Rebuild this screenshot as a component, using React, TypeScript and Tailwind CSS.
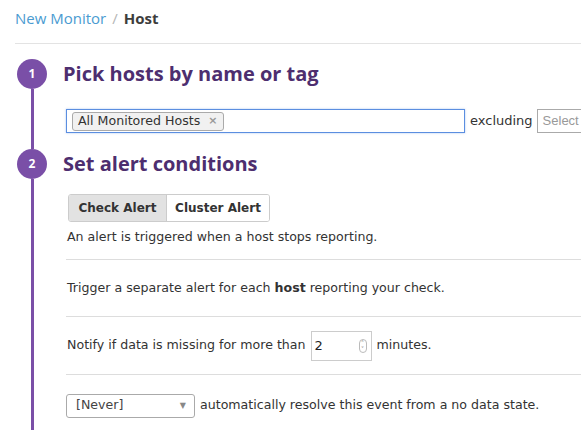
import React from 'react';

const body = "font-['DejaVu_Sans',sans-serif] text-[12.6px] text-[#333]";

const StepRail = ({ n }: { n: number }) => (
  <div className="flex w-[30px] shrink-0 flex-col items-center">
    <div className="flex h-[30px] w-[30px] items-center justify-center rounded-full bg-[#7a4fa7] font-['Open_Sans',sans-serif] text-[12px] font-bold text-white">
      {n}
    </div>
    <div className="w-[3px] flex-1 bg-[#7a4fa7]" />
  </div>
);

export default function App() {
  return (
    <div className="h-[430px] w-[581px] overflow-hidden bg-white">
      {/* Breadcrumb */}
      <div className="ml-[15px] flex h-[44px] items-center border-b border-[#e3e3e3] pb-[7px] font-['Open_Sans',sans-serif] text-[15px]">
        <span className="text-[#4a9bd1]">New Monitor</span>
        <span className="mx-[6px] text-[#b5b5b5]">/</span>
        <span className="font-bold text-[#3d3d3d]">Host</span>
      </div>

      {/* Step 1 */}
      <div className="ml-[17px] flex gap-[16px] pt-[15px]">
        <StepRail n={1} />
        <div className="min-w-0 flex-1 pb-[16px]">
          <h2 className="flex h-[30px] items-center font-['Open_Sans',sans-serif] text-[20px] font-bold text-[#4d2e6f]">
            Pick hosts by name or tag
          </h2>
          <div className="ml-[3px] mt-[20px] flex items-center whitespace-nowrap">
            <div className="flex h-[24px] w-[399px] shrink-0 items-center border border-[#5b8ee0] px-[5px] shadow-[0_0_2px_rgba(91,142,224,0.5)]">
              <span className={`flex h-[19px] items-center gap-[8px] rounded-[3px] border border-[#aaa] bg-[#f1f1f1] pl-[5px] pr-[6px] ${body}`}>
                All Monitored Hosts
                <span className="text-[11px] font-bold text-[#999]">×</span>
              </span>
            </div>
            <span className={`ml-[5px] ${body} text-[13px]`}>excluding</span>
            <div className="ml-[4px] flex h-[24px] w-[60px] shrink-0 items-center border border-[#aaa] px-[5px] font-['Liberation_Sans',sans-serif] text-[13px] text-[#999]">
              Select
            </div>
          </div>
        </div>
      </div>

      {/* Step 2 */}
      <div className="ml-[17px] flex gap-[16px]">
        <StepRail n={2} />
        <div className="min-w-0 flex-1">
          <h2 className="flex h-[30px] items-center font-['Open_Sans',sans-serif] text-[20px] font-bold text-[#4d2e6f]">
            Set alert conditions
          </h2>
          <div className="ml-[5px] mt-[15px] flex h-[28px] w-[202px] overflow-hidden rounded-[3px] border border-[#ccc] font-['DejaVu_Sans',sans-serif] text-[12px] font-bold text-[#333]">
            <div className="flex w-[98px] items-center justify-center border-r border-[#ccc] bg-[#e2e2e2]">Check Alert</div>
            <div className="flex flex-1 items-center justify-center bg-white">Cluster Alert</div>
          </div>
          <p className={`ml-[4px] mt-[6px] pb-[13px] leading-[18px] ${body}`}>
            An alert is triggered when a host stops reporting.
          </p>
          <div className={`ml-[3px] flex h-[57px] items-center border-t border-[#ddd] pl-[1px] ${body}`}>
            <span>
              Trigger a separate alert for each <b>host</b> reporting your check.
            </span>
          </div>
          <div className={`ml-[3px] flex h-[58px] items-center border-t border-[#ddd] pl-[1px] ${body}`}>
            <span>Notify if data is missing for more than</span>
            <div className="mx-[5px] flex h-[30px] w-[61px] items-center justify-between border border-[#ccc] pl-[3px] pr-[4px]">
              <span className="font-['DejaVu_Sans',sans-serif] text-[13px] text-[#222]">2</span>
              <span className="flex h-[14px] w-[8px] flex-col items-center justify-center rounded-[4px] border border-[#bbb] text-[6px] leading-[6px] text-[#777]">
                <span>˄</span>
                <span>˅</span>
              </span>
            </div>
            <span>minutes.</span>
          </div>
          <div className={`ml-[3px] flex h-[62px] items-center border-t border-[#ddd] ${body}`}>
            <div className="mr-[5px] flex h-[24px] w-[129px] items-center justify-between rounded-[3px] border border-[#aaa] pl-[9px] pr-[8px]">
              <span className="text-[#444]">[Never]</span>
              <span className="text-[8px] text-[#888]">▼</span>
            </div>
            <span>automatically resolve this event from a no data state.</span>
          </div>
        </div>
      </div>
    </div>
  );
}
